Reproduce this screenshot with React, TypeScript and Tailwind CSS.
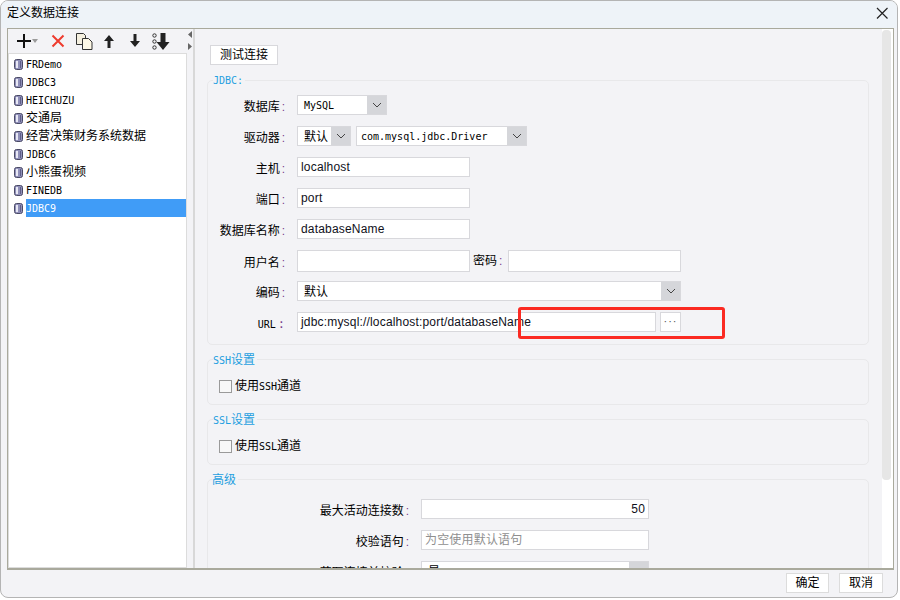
const cjk = "font-['Liberation_Sans','Noto_Sans_CJK_SC',sans-serif]"
const mono = "font-['DejaVu_Sans_Mono','Noto_Sans_CJK_SC',monospace]"

const connections = ["FRDemo", "JDBC3", "HEICHUZU", "交通局", "经营决策财务系统数据", "JDBC6", "小熊蛋视频", "FINEDB", "JDBC9"]

function DbIcon() {
    return (
        <svg width="9" height="11" viewBox="0 0 9 11" className="shrink-0">
            <rect x="0.5" y="0.5" width="8" height="10" rx="2" fill="#8f8fb8" stroke="#4a4a66" />
            <rect x="2" y="2" width="2" height="7" fill="#e8e8f4" />
            <rect x="6" y="2" width="1" height="7" fill="#5f5f88" />
        </svg>
    )
}

function Chevron() {
    return (
        <svg width="10" height="6" viewBox="0 0 10 6">
            <path d="M1 1l4 4 4-4" fill="none" stroke="#444" strokeWidth="1" />
        </svg>
    )
}

function Select({ value, width, valueClass = "text-[12px] pl-[6px] pt-[1px]" }: { value: string; width: string; valueClass?: string }) {
    return (
        <div className={`flex h-5 items-stretch border border-[#d8d8dc] bg-white ${width}`}>
            <div className={`flex min-w-0 flex-1 items-center overflow-hidden whitespace-nowrap ${valueClass}`}>{value}</div>
            <div className="flex w-[19px] items-center justify-center bg-[#d5d6da]">
                <Chevron />
            </div>
        </div>
    )
}

function Input({ value, width, align = "text-left", muted = false }: { value?: string; width: string; align?: string; muted?: boolean }) {
    return (
        <div className={`flex items-center border border-[#d8d8dc] bg-white px-[3px] text-[12px] tracking-[0.18px] ${width} ${align} ${muted ? "text-[#8f8f8f]" : "text-[#10101a]"}`}>
            <span className="w-full whitespace-nowrap">{value}</span>
        </div>
    )
}

function Colon() {
    return <span className="ml-[2px] text-[12px] text-[#7a3f8f]">:</span>
}

function Row({ label, children, labelWidth = "w-[76px]", labelClass = "text-[12px]", height = "h-5" }: { label: string; children: React.ReactNode; labelWidth?: string; labelClass?: string; height?: string }) {
    return (
        <div className={`flex items-center gap-[12px] ${height}`}>
            <div className={`shrink-0 pt-[3px] text-right whitespace-nowrap ${labelWidth} ${labelClass}`}>
                {label}
                <Colon />
            </div>
            {children}
        </div>
    )
}

function Group({ title, titleClass = "left-[5px] text-[12px]", className, children }: { title: React.ReactNode; titleClass?: string; className: string; children: React.ReactNode }) {
    return (
        <div className={`relative rounded-[5px] border border-[#e8e8ea] ${className}`}>
            <div className={`absolute -top-[8px] bg-[#f3f3f6] pr-[2px] leading-[16px] text-[#1f9fe0] ${titleClass}`}>{title}</div>
            {children}
        </div>
    )
}

function Latin({ children }: { children: string }) {
    return <span className={`text-[10px] ${mono}`}>{children}</span>
}

function Toolbar() {
    return (
        <div className="flex h-[24px] items-center pl-[8px]">
            <svg width="24" height="16" viewBox="0 0 24 16">
                <path d="M1 8h14M8 1v14" stroke="#111" strokeWidth="2" />
                <path d="M16 6h6l-3 4z" fill="#9a9a9a" />
            </svg>
            <svg width="14" height="14" viewBox="0 0 14 14" className="ml-[11px]">
                <path d="M1.500 1.500l11 11M12.500 1.500l-11 11" stroke="#ee3b2e" strokeWidth="2" />
            </svg>
            <svg width="17" height="17" viewBox="0 0 17 17" className="ml-[11px]">
                <path d="M.5.5h7l2 2v9h-9z" fill="#f4efdf" stroke="#333" />
                <path d="M6.500 5.500h6l3.500 3.500v7.500h-9.500z" fill="#fdf8e6" stroke="#333" />
            </svg>
            <svg width="12" height="14" viewBox="0 0 12 14" className="ml-[10px]">
                <path d="M6 1l5 6H7.500v7h-3V7H1z" fill="#222" />
            </svg>
            <svg width="12" height="14" viewBox="0 0 12 14" className="ml-[14px]">
                <path d="M6 13L1 7h3.500V0h3v7H11z" fill="#222" />
            </svg>
            <svg width="18" height="17" viewBox="0 0 18 17" className="ml-[11px]">
                <circle cx="2.500" cy="2.500" r="1.700" fill="none" stroke="#333" />
                <circle cx="2.500" cy="8.500" r="1.700" fill="none" stroke="#333" />
                <circle cx="2.500" cy="14.500" r="1.700" fill="none" stroke="#333" />
                <path d="M8.500 0h5v9H17.500l-6.500 8-6.500-8h4z" fill="#222" />
            </svg>
        </div>
    )
}

export default function App() {
    return (
        <div className={`h-[600px] w-[900px] overflow-hidden bg-white text-black ${cjk}`}>
            <div className="flex h-[598px] w-[898px] flex-col overflow-hidden rounded-lg border border-[#b4b4b4] bg-[#f3f3f6]">
                <div className="flex h-[27px] shrink-0 items-center justify-between bg-[#eef3f8] pb-[3px] pl-[6px] pr-[4px] text-[12px]">
                    <span>定义数据连接</span>
                    <svg width="22" height="22" viewBox="0 0 22 22">
                        <path d="M6 6l10.500 10.500M16.500 6L6 16.500" stroke="#222" strokeWidth="1.200" />
                    </svg>
                </div>

                <div className="ml-[6px] mr-[3px] flex h-[542px] shrink-0 border border-b-2 border-[#a9a99c]">
                    <div className="-ml-[3px] flex w-[182px] shrink-0 flex-col pl-[3px]">
                        <Toolbar />
                        <div className="flex-1 border border-[#dcdcdc] bg-white pt-[1px]">
                            {connections.map((name) => (
                                <div key={name} className="flex h-[18px] items-center">
                                    <div className="flex w-[17px] shrink-0 justify-end pr-[3px]">
                                        <DbIcon />
                                    </div>
                                    {/[A-Z]/.test(name) ? (
                                        <div className={`flex h-full flex-1 items-center text-[10px] ${mono} ${name === "JDBC9" ? "bg-[#409cf7] text-white" : ""}`}>{name}</div>
                                    ) : (
                                        <div className="flex h-full flex-1 items-center text-[12px]">{name}</div>
                                    )}
                                </div>
                            ))}
                        </div>
                    </div>

                    <div className="flex w-[8px] shrink-0 flex-col items-center border-r-2 border-[#d8d8d8] pt-[1px]">
                        <svg width="4" height="20" viewBox="0 0 4 20" className="mt-[1px]">
                            <path d="M4 0v7L0 3.500zM0 12v7l4-3.500z" fill="#666" />
                        </svg>
                    </div>

                    <div className="min-w-0 flex-1 overflow-hidden pl-[12px] pr-[13px] pt-[16px]">
                        <div className="ml-[3px] flex h-[20px] w-[68px] items-center justify-center border border-[#d8d8dc] bg-white text-[12px]">测试连接</div>

                        <Group title="JDBC:" className="mt-[15px] h-[265px] w-[662px] pt-[14px]" titleClass={`left-[5px] text-[10px] ${mono}`}>
                            <div className="flex flex-col gap-[11px] pl-[1px]">
                                <Row label="数据库">
                                    <Select value="MySQL" width="w-[90px]" valueClass={`pl-[6px] text-[10px] ${mono}`} />
                                </Row>
                                <Row label="驱动器">
                                    <div className="flex gap-[5px]">
                                        <Select value="默认" width="w-[54px]" />
                                        <Select value="com.mysql.jdbc.Driver" width="w-[171px]" valueClass={`pl-[4px] text-[10px] ${mono}`} />
                                    </div>
                                </Row>
                                <Row label="主机">
                                    <Input value="localhost" width="h-5 w-[173px]" />
                                </Row>
                                <Row label="端口">
                                    <Input value="port" width="h-5 w-[173px]" />
                                </Row>
                                <Row label="数据库名称">
                                    <Input value="databaseName" width="h-5 w-[173px]" />
                                </Row>
                                <Row label="用户名" height="h-[22px]">
                                    <Input width="h-[22px] w-[173px]" />
                                    <div className="-ml-[9px] flex items-center gap-[6px] text-[12px]">
                                        <span>
                                            密码
                                            <Colon />
                                        </span>
                                        <Input width="h-[22px] w-[173px]" />
                                    </div>
                                </Row>
                                <div className="-mt-[2px]">
                                    <Row label="编码">
                                        <Select value="默认" width="w-[384px]" />
                                    </Row>
                                </div>
                                <div className="relative">
                                    <Row label="URL" labelClass={`text-[10px] ${mono}`}>
                                        <div className="flex gap-[4px]">
                                            <Input value="jdbc:mysql://localhost:port/databaseName" width="h-5 w-[359px]" />
                                            <div className="flex h-5 w-[21px] items-center justify-center border border-[#d8d8dc] bg-white pb-[2px] text-[11px] leading-none tracking-[1px] text-[#555]">···</div>
                                        </div>
                                    </Row>
                                    <div className="pointer-events-none absolute -top-[5px] left-[309px] h-[32px] w-[207px] rounded-[3px] border-[3px] border-[#fb2a22]" />
                                </div>
                            </div>
                        </Group>

                        <Group title={<><Latin>SSH</Latin>设置</>} className="mt-[14px] flex h-[46px] w-[662px] items-center pt-[8px]">
                            <label className="ml-[11px] flex items-center gap-[3px] text-[12px]">
                                <span className="h-[13px] w-[13px] border border-[#9a9a9a] bg-[#f8f8f8]" />
                                <span>使用<Latin>SSH</Latin>通道</span>
                            </label>
                        </Group>

                        <Group title={<><Latin>SSL</Latin>设置</>} className="mt-[14px] flex h-[46px] w-[662px] items-center pt-[8px]">
                            <label className="ml-[11px] flex items-center gap-[3px] text-[12px]">
                                <span className="h-[13px] w-[13px] border border-[#9a9a9a] bg-[#f8f8f8]" />
                                <span>使用<Latin>SSL</Latin>通道</span>
                            </label>
                        </Group>

                        <Group title="高级" className="mt-[14px] h-[120px] w-[662px] pt-[19px]" titleClass="left-[4px] text-[12px]">
                            <div className="flex flex-col gap-[11px]">
                                <Row label="最大活动连接数" labelWidth="w-[201px]">
                                    <Input value="50" width="h-5 w-[228px]" align="text-right" />
                                </Row>
                                <Row label="校验语句" labelWidth="w-[201px]">
                                    <Input value="为空使用默认语句" width="h-5 w-[228px]" muted />
                                </Row>
                                <Row label="获取连接前校验" labelWidth="w-[201px]">
                                    <Select value="是" width="w-[228px]" />
                                </Row>
                            </div>
                        </Group>
                    </div>

                    <div className="w-[11px] shrink-0 bg-white pt-[1px]">
                        <div className="h-[450px] w-[9px] rounded-[4px] bg-[#e6e6e6]" />
                    </div>
                </div>

                <div className="flex flex-1 items-start justify-end gap-[10px] pr-[14px] pt-[3px] text-[12px]">
                    <div className="flex h-5 w-[43px] items-center justify-center border border-[#dcdcdc] bg-white">确定</div>
                    <div className="flex h-5 w-[44px] items-center justify-center border border-[#dcdcdc] bg-white">取消</div>
                </div>
            </div>
        </div>
    )
}
